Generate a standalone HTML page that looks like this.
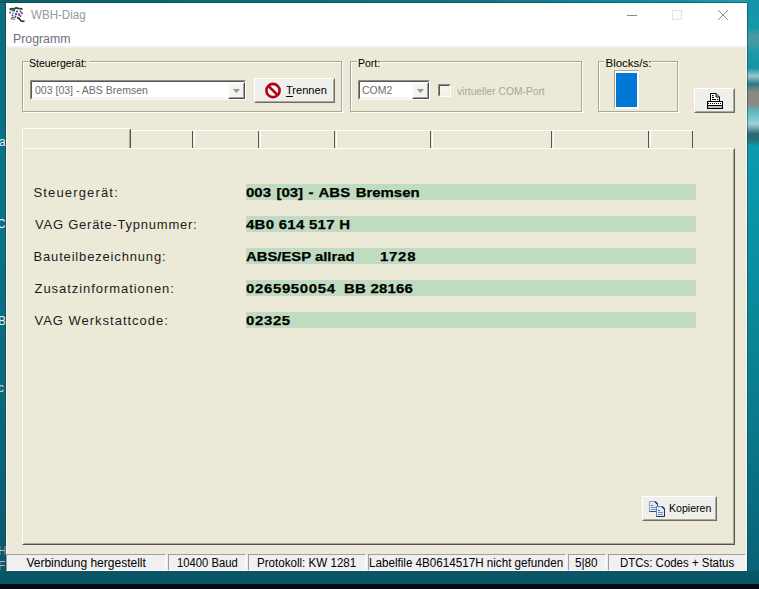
<!DOCTYPE html>
<html><head><meta charset="utf-8">
<style>
html,body{margin:0;padding:0}
body{width:759px;height:589px;position:relative;overflow:hidden;background:#08636e;font-family:"Liberation Sans",sans-serif}
div,span,svg{position:absolute;box-sizing:border-box}
.t{white-space:pre;line-height:1;transform-origin:0 0;color:#000}
.f11{font-size:11px}
.f115{font-size:11.5px}
.f12{font-size:12px}
.b{font-weight:bold;-webkit-text-stroke:0.25px #000}
.eg{border:1px solid #aca899}
.ew{border:1px solid #fff}
.sk1{border-style:solid;border-width:1px;border-color:#8e8c80 #fff #fff #8e8c80}
.sk2{border-style:solid;border-width:1px;border-color:#5a5850 #f1efe2 #f1efe2 #5a5850}
.rb1{border-style:solid;border-width:1px;border-color:#fff #716f64 #716f64 #fff}
.rb2{border-style:solid;border-width:1px;border-color:#f1efe2 #aca899 #aca899 #f1efe2}
.grn{background:#c0dcc0;height:16px;left:246px;width:450px}
</style></head><body>

<!-- desktop -->
<div style="left:0;top:0;width:759px;height:3px;background:linear-gradient(to right,#08606c,#0a6a78 200px,#0b7582 450px,#1090a0 680px,#22a0ae 759px)"></div>
<div style="left:0;top:2px;width:747px;height:1px;background:rgba(20,50,60,0.45)"></div>
<div style="left:0;top:3px;width:6px;height:568px;background:linear-gradient(#0a6d80,#0a7288 40%,#0a6478 80%,#0b586a)"></div>
<div style="left:747px;top:0;width:12px;height:571px;background:linear-gradient(#1596a8 0px,#1798aa 28px,#4a9aa0 36px,#3a9aa4 46px,#1a9aaa 52px,#1894a4 68px,#9ac8cc 76px,#2a7a85 84px,#8a8a80 92px,#8a8a80 104px,#5ab8c4 112px,#a0d0d4 124px,#2a6a72 134px,#2a7078 140px,#0c9aac 146px,#0a96a8 200px,#0a8a9c 300px,#0a7c90 400px,#0a7084 480px,#0a6276 571px)"></div>
<div style="left:0;top:571px;width:759px;height:13px;background:#0a5566"></div>
<div style="left:0;top:584px;width:759px;height:5px;background:#030b12"></div>

<div style="left:0;top:0;width:6px;height:589px;overflow:hidden">
<span class="t f12" style="left:-1px;top:136px;color:#e8f0f2">a</span>
<span class="t f12" style="left:-3px;top:218px;color:#e8f0f2">C</span>
<span class="t f12" style="left:-2px;top:315px;color:#e8f0f2">B</span>
<span class="t f12" style="left:-2px;top:382px;color:#c8d8dc">c</span>
<span class="t f12" style="left:-2px;top:545px;color:#a8bcc0">H</span>
<span class="t f12" style="left:-2px;top:560px;color:#a0b4b8">F</span>
</div>
<!-- window -->
<div style="left:6px;top:3px;width:741px;height:568px;background:#ece9d8"></div>
<div style="left:6px;top:3px;width:741px;height:43px;background:#fff"></div>
<div style="left:6px;top:46px;width:741px;height:2px;background:#f0f0ee"></div>


<div style="left:6px;top:48px;width:1px;height:506px;background:#f4faf4"></div>
<div style="left:746px;top:48px;width:1px;height:506px;background:#f4f8f4"></div>
<div style="left:747px;top:3px;width:1px;height:568px;background:rgba(20,60,70,0.5)"></div>
<div style="left:5px;top:3px;width:1px;height:568px;background:rgba(20,60,70,0.5)"></div>
<!-- title bar -->
<svg style="left:6px;top:4px" width="22" height="22" viewBox="0 0 22 22">
 <path d="M3.5 5.5 Q6 4 8 5 Q10 3.5 12 4.3 Q14 4.5 16.5 5.2" stroke="#1e4a2a" stroke-width="1.8" fill="none"/>
 <path d="M5 5.8 L9 7" stroke="#2c6a3a" stroke-width="1.5"/>
 <circle cx="4" cy="8.5" r="0.9" fill="#4a4a8a"/>
 <circle cx="7" cy="9" r="1.5" fill="#b8b8f0"/>
 <circle cx="10" cy="10" r="1.2" fill="#6a5ab8"/>
 <circle cx="11" cy="7.5" r="1" fill="#3a3a8a"/>
 <circle cx="14.5" cy="7.5" r="1" fill="#4a4a9a"/>
 <circle cx="16" cy="9.3" r="1" fill="#3a3a8a"/>
 <circle cx="13" cy="10.5" r="1.3" fill="#9a3a7a"/>
 <circle cx="6.5" cy="11.5" r="0.9" fill="#4a4a9a"/>
 <circle cx="9.5" cy="12.5" r="0.9" fill="#3a3a7a"/>
 <circle cx="14.5" cy="12" r="0.9" fill="#4a4a8a"/>
 <path d="M5 14.5 Q7 13 9 14" stroke="#555" stroke-width="1.3" fill="none"/>
 <path d="M5.5 15.5 Q8 16 9.5 15" stroke="#999" stroke-width="1" fill="none"/>
 <path d="M11 13.5 Q13 14 14 15.5 L15 17 Q17 17.5 18.5 17" stroke="#222" stroke-width="1.4" fill="none"/>
</svg>
<span class="t f12" style="left:31px;top:9px;color:#999;transform:scaleX(0.964)">WBH-Diag</span>
<div style="left:627px;top:15px;width:10px;height:1px;background:#8a8a8a"></div>
<div style="left:672px;top:10px;width:10px;height:10px;border:1px solid #e2e2e2"></div>
<svg style="left:717px;top:9px" width="12" height="12" viewBox="0 0 12 12"><path d="M1 1 L11 11 M11 1 L1 11" stroke="#8a8a8a" stroke-width="1"/></svg>

<!-- menu -->
<span class="t f12" style="left:13px;top:33px;color:#6d6d80;transform:scaleX(1.026)">Programm</span>

<!-- group Steuergeraet -->
<div class="ew" style="left:23px;top:62px;width:320px;height:51px"></div>
<div class="eg" style="left:22px;top:61px;width:320px;height:51px"></div>
<div style="left:29px;top:56px;width:60px;height:12px;background:#ece9d8"></div>
<span class="t f115" style="left:29.3px;top:58px;transform:scaleX(0.912)">Steuergerät:</span>

<!-- combo 1 -->
<div class="sk1" style="left:30px;top:80px;width:216px;height:20px;background:#fff"></div>
<div class="sk2" style="left:31px;top:81px;width:214px;height:18px"></div>
<span class="t f115" style="left:34.8px;top:85px;color:#6d6d6d;transform:scaleX(0.915)">003 [03] - ABS Bremsen</span>
<div style="left:228px;top:82px;width:17px;height:17px;background:#f3f3f1;border-style:solid;border-width:1px;border-color:#f8f8f6 #4d4d4d #4d4d4d #f8f8f6"></div>
<div style="left:229px;top:83px;width:15px;height:15px;border-style:solid;border-width:1px;border-color:#fff #a0a0a0 #a0a0a0 #fff"></div>
<svg style="left:233px;top:89px" width="7" height="4" viewBox="0 0 7 4"><path d="M0 0 H7 L3.5 4 Z" fill="#959595"/></svg>

<!-- Trennen button -->
<div class="rb1" style="left:254px;top:78px;width:81px;height:25px;background:#efefec"></div>
<div class="rb2" style="left:255px;top:79px;width:79px;height:23px"></div>
<svg style="left:264px;top:82px" width="18" height="18" viewBox="0 0 18 18">
 <circle cx="9" cy="8.5" r="6.6" fill="#fff6e6" stroke="#b0001c" stroke-width="2.6"/>
 <path d="M4.6 4.1 L13.4 12.9" stroke="#b0001c" stroke-width="2.6"/>
</svg>
<span class="t f115" style="left:286px;top:85px;transform:scaleX(0.962)">Trennen</span>
<div style="left:286px;top:96px;width:7px;height:1px;background:#000"></div>

<!-- group Port -->
<div class="ew" style="left:351px;top:62px;width:232px;height:51px"></div>
<div class="eg" style="left:350px;top:61px;width:232px;height:51px"></div>
<div style="left:357px;top:56px;width:23px;height:12px;background:#ece9d8"></div>
<span class="t f115" style="left:358.2px;top:58px;transform:scaleX(0.909)">Port:</span>
<div class="sk1" style="left:358px;top:80px;width:72px;height:20px;background:#fff"></div>
<div class="sk2" style="left:359px;top:81px;width:70px;height:18px"></div>
<span class="t f115" style="left:362px;top:85.3px;color:#6d6d6d;transform:scaleX(0.9125)">COM2</span>
<div style="left:412px;top:82px;width:17px;height:17px;background:#f3f3f1;border-style:solid;border-width:1px;border-color:#f8f8f6 #4d4d4d #4d4d4d #f8f8f6"></div>
<div style="left:413px;top:83px;width:15px;height:15px;border-style:solid;border-width:1px;border-color:#fff #a0a0a0 #a0a0a0 #fff"></div>
<svg style="left:417px;top:89px" width="7" height="4" viewBox="0 0 7 4"><path d="M0 0 H7 L3.5 4 Z" fill="#959595"/></svg>
<div class="sk1" style="left:438px;top:84px;width:13px;height:13px;background:#f4f3ee"></div>
<div class="sk2" style="left:439px;top:85px;width:11px;height:11px"></div>
<span class="t f115" style="left:457px;top:85.5px;color:#a8a79c;transform:scaleX(0.891)">virtueller COM-Port</span>

<!-- group Blocks -->
<div class="ew" style="left:599px;top:62px;width:80px;height:51px"></div>
<div class="eg" style="left:598px;top:61px;width:80px;height:51px"></div>
<div style="left:604px;top:56px;width:48px;height:12px;background:#ece9d8"></div>
<span class="t f115" style="left:605.5px;top:58px;transform:scaleX(1.0)">Blocks/s:</span>
<div style="left:614px;top:70px;width:25px;height:39px;background:#fff;border-style:solid;border-width:1px;border-color:#aca899 #fff #fff #aca899"></div>
<div style="left:616px;top:73px;width:21px;height:34px;background:#0078d7"></div>

<!-- printer button -->
<div class="rb1" style="left:694px;top:88px;width:41px;height:25px;background:#efefec"></div>
<div class="rb2" style="left:695px;top:89px;width:39px;height:23px"></div>
<svg style="left:707px;top:93px" width="16" height="16" viewBox="0 0 16 16">
 <path d="M3.5 8.5 V0.5 H9 L12.5 4 V8.5" fill="#fff" stroke="#000" stroke-width="1"/>
 <path d="M9 0.5 V4 H12.5" fill="none" stroke="#000" stroke-width="1"/>
 <rect x="5" y="2" width="1.5" height="1.2" fill="#000"/>
 <rect x="5" y="4" width="2" height="1" fill="#000"/>
 <rect x="5" y="6" width="4" height="1" fill="#000"/>
 <rect x="10" y="6" width="1.2" height="1.2" fill="#000"/>
 <rect x="0.5" y="8.5" width="15" height="7" fill="#fff" stroke="#000" stroke-width="1"/>
 <path d="M1 10.5 H15" stroke="#000" stroke-width="1" stroke-dasharray="1 1"/>
 <rect x="1" y="12" width="14" height="1" fill="#000"/>
 <rect x="1" y="13" width="14" height="2" fill="#c0c0c0"/>
</svg>

<!-- tabs -->
<div style="left:22px;top:128px;width:109px;height:1px;background:#fff"></div>
<div style="left:22px;top:128px;width:1px;height:21px;background:#fff"></div>
<div style="left:130px;top:129px;width:1px;height:19px;background:#555"></div>
<div style="left:129px;top:130px;width:1px;height:18px;background:#aca899"></div>
<div style="left:131px;top:130px;width:562px;height:1px;background:#fff"></div>
<div style="left:192px;top:131px;width:1px;height:17px;background:#555"></div>
<div style="left:258px;top:131px;width:1px;height:17px;background:#555"></div>
<div style="left:334px;top:131px;width:1px;height:17px;background:#555"></div>
<div style="left:430px;top:131px;width:1px;height:17px;background:#555"></div>
<div style="left:551px;top:131px;width:1px;height:17px;background:#555"></div>
<div style="left:648px;top:131px;width:1px;height:17px;background:#555"></div>
<div style="left:692px;top:131px;width:1px;height:17px;background:#555"></div>
<div style="left:194px;top:131px;width:1px;height:17px;background:#fff"></div>
<div style="left:260px;top:131px;width:1px;height:17px;background:#fff"></div>
<div style="left:336px;top:131px;width:1px;height:17px;background:#fff"></div>
<div style="left:432px;top:131px;width:1px;height:17px;background:#fff"></div>
<div style="left:553px;top:131px;width:1px;height:17px;background:#fff"></div>
<div style="left:650px;top:131px;width:1px;height:17px;background:#fff"></div>

<!-- page -->
<div style="left:22px;top:148px;width:713px;height:397px;border-style:solid;border-width:1px;border-color:#fff #555 #555 #fff"></div>
<div style="left:23px;top:149px;width:711px;height:395px;border-style:solid;border-width:1px;border-color:#ece9d8 #aca899 #aca899 #ece9d8"></div>

<!-- rows -->
<div class="grn" style="top:184px"></div>
<div class="grn" style="top:216px"></div>
<div class="grn" style="top:248px"></div>
<div class="grn" style="top:280px"></div>
<div class="grn" style="top:312px"></div>

<span class="t" style="font-size:13px;left:33.5px;top:186px;color:#1c1c1c;letter-spacing:1.155px">Steuergerät:</span>
<span class="t" style="font-size:13px;left:35px;top:218px;color:#1c1c1c;letter-spacing:0.765px">VAG Geräte-Typnummer:</span>
<span class="t" style="font-size:13px;left:33.5px;top:250px;color:#1c1c1c;letter-spacing:0.833px">Bauteilbezeichnung:</span>
<span class="t" style="font-size:13px;left:34.5px;top:282px;color:#1c1c1c;letter-spacing:0.947px">Zusatzinformationen:</span>
<span class="t" style="font-size:13px;left:34.5px;top:314px;color:#1c1c1c;letter-spacing:0.988px">VAG Werkstattcode:</span>

<span class="t b" style="font-size:13px;left:246px;top:186px;letter-spacing:0px;word-spacing:1.2px;transform:scaleX(1.15)">003 [03] - ABS Bremsen</span>
<span class="t b" style="font-size:13px;left:246px;top:218px;letter-spacing:0.25px;transform:scaleX(1.15)">4B0 614 517 H</span>
<span class="t b" style="font-size:13px;left:246px;top:250px;letter-spacing:0px;transform:scaleX(1.14)">ABS/ESP allrad</span>
<span class="t b" style="font-size:13px;left:380px;top:250px;letter-spacing:0.64px;transform:scaleX(1.15)">1728</span>
<span class="t b" style="font-size:13px;left:246px;top:282px;letter-spacing:0.57px;transform:scaleX(1.15)">0265950054</span>
<span class="t b" style="font-size:13px;left:343.5px;top:282px;letter-spacing:0.19px;transform:scaleX(1.15)">BB 28166</span>
<span class="t b" style="font-size:13px;left:246px;top:314px;letter-spacing:0.565px;transform:scaleX(1.15)">02325</span>

<!-- Kopieren button -->
<div class="rb1" style="left:642px;top:496px;width:75px;height:25px;background:#efefec"></div>
<div class="rb2" style="left:643px;top:497px;width:73px;height:23px"></div>
<svg style="left:649px;top:501px" width="17" height="17" viewBox="0 0 17 17">
 <path d="M0.5 0.5 H6 L8.5 3 V10.5 H0.5 Z" fill="#dfe9f8" stroke="#8a9ab8" stroke-width="1"/>
 <path d="M8.5 3 V10.5 H0.5" fill="none" stroke="#3a4a78" stroke-width="1"/>
 <path d="M6 0.5 L8.5 3" stroke="#1a2a5a" stroke-width="1.4"/>
 <rect x="2" y="4" width="2" height="1" fill="#5a6e98"/>
 <rect x="2" y="6" width="5" height="1" fill="#7a90c0"/>
 <rect x="2" y="8" width="5" height="1" fill="#7a90c0"/>
 <path d="M7.5 5.5 H13 L15.5 8 V15.5 H7.5 Z" fill="#dfe9f8" stroke="#6a7ea8" stroke-width="1"/>
 <path d="M15.5 8 V15.5 H7.5" fill="none" stroke="#1e2e62" stroke-width="1"/>
 <path d="M13 5.5 L15.5 8" stroke="#1a2a5a" stroke-width="1.4"/>
 <rect x="9" y="9" width="2" height="1" fill="#5a6e98"/>
 <rect x="9" y="11" width="5" height="1" fill="#7a90c0"/>
 <rect x="9" y="13" width="5" height="1" fill="#7a90c0"/>
</svg>
<span class="t f115" style="left:668.8px;top:503.3px;transform:scaleX(0.92)">Kopieren</span>

<!-- status bar -->
<div style="left:6px;top:554px;width:741px;height:17px;background:#f0f0f0"></div>
<div style="left:6px;top:554px;width:160px;height:17px;border-style:solid;border-width:1px;border-color:#a0a0a0 #fff #fff #a0a0a0"></div>
<div style="left:168px;top:554px;width:78px;height:17px;border-style:solid;border-width:1px;border-color:#a0a0a0 #fff #fff #a0a0a0"></div>
<div style="left:248px;top:554px;width:118px;height:17px;border-style:solid;border-width:1px;border-color:#a0a0a0 #fff #fff #a0a0a0"></div>
<div style="left:368px;top:554px;width:198px;height:17px;border-style:solid;border-width:1px;border-color:#a0a0a0 #fff #fff #a0a0a0"></div>
<div style="left:568px;top:554px;width:38px;height:17px;border-style:solid;border-width:1px;border-color:#a0a0a0 #fff #fff #a0a0a0"></div>
<div style="left:608px;top:554px;width:138px;height:17px;border-style:solid;border-width:1px;border-color:#a0a0a0 #fff #fff #a0a0a0"></div>
<span class="t f12" style="left:26.4px;top:557px;transform:scaleX(1.0)">Verbindung hergestellt</span>
<span class="t f12" style="left:176.5px;top:557px;transform:scaleX(0.937)">10400 Baud</span>
<span class="t f12" style="left:257px;top:557px;transform:scaleX(0.966)">Protokoll: KW 1281</span>
<span class="t f12" style="left:368.8px;top:557px;transform:scaleX(0.97)">Labelfile 4B0614517H nicht gefunden</span>
<span class="t f12" style="left:575px;top:557px;transform:scaleX(0.977)">5|80</span>
<span class="t f12" style="left:619.5px;top:557px;transform:scaleX(0.954)">DTCs: Codes + Status</span>

</body></html>
